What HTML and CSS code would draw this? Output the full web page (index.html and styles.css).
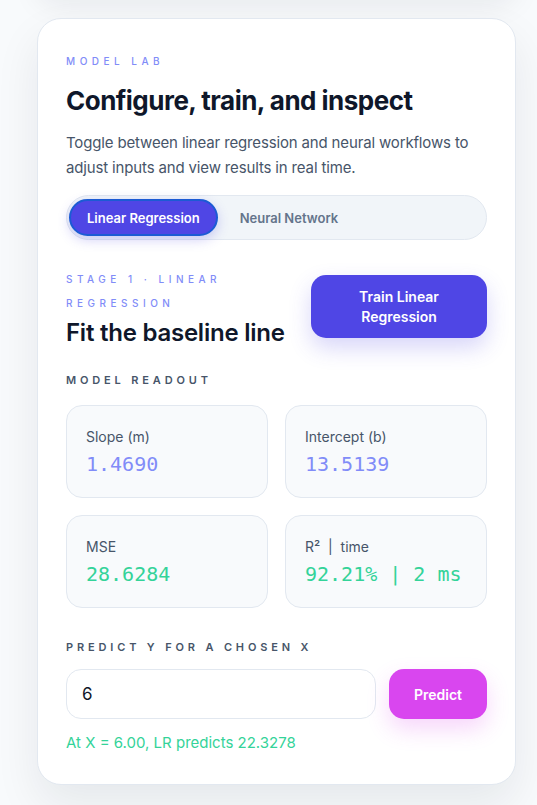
FILE: index.html
```html
<!DOCTYPE html>
<html lang="en">
<head>
<meta charset="utf-8">
<title>Model Lab</title>
<link rel="stylesheet" href="styles.css">
</head>
<body>
<div class="page">
  <div class="prev-card"></div>
  <section class="card">
    <p class="eyebrow">Model Lab</p>
    <h1 class="title">Configure, train, and inspect</h1>
    <p class="lead">Toggle between linear regression and neural workflows to adjust inputs and view results in real time.</p>

    <div class="toggle">
      <button class="toggle-btn active">Linear Regression</button>
      <button class="toggle-btn">Neural Network</button>
    </div>

    <div class="stage">
      <div class="stage-text">
        <p class="eyebrow stage-eyebrow">Stage 1 · Linear Regression</p>
        <h2 class="stage-title">Fit the baseline line</h2>
      </div>
      <button class="train-btn">Train Linear Regression</button>
    </div>

    <p class="section-label">Model Readout</p>
    <div class="stats">
      <div class="stat">
        <span class="stat-label">Slope (m)</span>
        <span class="stat-value indigo">1.4690</span>
      </div>
      <div class="stat">
        <span class="stat-label">Intercept (b)</span>
        <span class="stat-value indigo">13.5139</span>
      </div>
      <div class="stat">
        <span class="stat-label">MSE</span>
        <span class="stat-value green">28.6284</span>
      </div>
      <div class="stat">
        <span class="stat-label">R² &nbsp;|&nbsp; time</span>
        <span class="stat-value green">92.21% | 2 ms</span>
      </div>
    </div>

    <p class="section-label predict-label">Predict y for a chosen x</p>
    <div class="predict-row">
      <input class="predict-input" type="text" value="6">
      <button class="predict-btn">Predict</button>
    </div>
    <p class="result">At X = 6.00, LR predicts 22.3278</p>
  </section>
</div>
</body>
</html>
```

FILE: styles.css
```css
* { box-sizing: border-box; }

html, body {
  margin: 0;
  padding: 0;
  background: #f8fafc;
  font-family: Inter, "Noto Sans", sans-serif;
  color: #0f172a;
  overflow: hidden;
}

.page {
  padding: 0 21px 40px 37px;
  display: flex;
  flex-direction: column;
}

.prev-card {
  height: 40px;
  margin-top: -46px;
  margin-bottom: 24px;
  border-radius: 24px;
  background: #ffffff;
  box-shadow: 0 10px 30px rgba(15, 23, 42, 0.08);
}

.card {
  background: #ffffff;
  border: 1px solid #e2e8f0;
  border-radius: 24px;
  padding: 35px 28px 29px;
  box-shadow: 0 20px 45px rgba(15, 23, 42, 0.08);
  display: flex;
  flex-direction: column;
}

.eyebrow {
  margin: 0;
  font-size: 10px;
  line-height: 14px;
  font-weight: 500;
  text-transform: uppercase;
  letter-spacing: 0.45em;
  color: #818cf8;
}

.title {
  margin: 16px 0 0;
  font-size: 26px;
  line-height: 34px;
  font-weight: 700;
  letter-spacing: -0.02em;
  color: #0f172a;
}

.lead {
  margin: 12px 0 0;
  font-size: 15px;
  line-height: 25px;
  letter-spacing: -0.15px;
  color: #475569;
}

.toggle {
  margin-top: 15px;
  display: flex;
  align-items: center;
  gap: 4px;
  padding: 0 2px;
  height: 45px;
  border-radius: 999px;
  background: #f1f5f9;
  border: 1px solid #e2e8f0;
}

.toggle-btn {
  font-family: inherit;
  font-size: 13px;
  font-weight: 600;
  border: 2px solid transparent;
  background: transparent;
  color: #64748b;
  height: 37px;
  padding: 0 16px;
  border-radius: 999px;
}

.toggle-btn.active {
  background: #4f46e5;
  color: #ffffff;
  border-color: #1c5bd4;
  box-shadow: 0 4px 12px rgba(79, 70, 229, 0.25);
}

.stage {
  margin-top: 34px;
  display: flex;
  justify-content: space-between;
  align-items: flex-start;
}

.stage-eyebrow {
  line-height: 24px;
  margin-top: -7px;
}

.stage-title {
  margin: 3px 0 0;
  font-size: 24px;
  line-height: 30px;
  font-weight: 600;
  letter-spacing: -0.01em;
  color: #0f172a;
}

.train-btn {
  width: 176px;
  height: 63px;
  flex: none;
  margin-top: 1px;
  border: none;
  border-radius: 15px;
  background: #4f46e5;
  color: #ffffff;
  font-family: inherit;
  font-size: 14px;
  font-weight: 600;
  line-height: 20px;
  padding: 0 36px;
  box-shadow: 0 10px 22px rgba(79, 70, 229, 0.22);
}

.section-label {
  margin: 24px 0 0;
  font-size: 11px;
  line-height: 16px;
  font-weight: 600;
  letter-spacing: 0.35em;
  text-transform: uppercase;
  color: #475569;
}

.stats {
  margin-top: 17px;
  display: grid;
  grid-template-columns: 1fr 1fr;
  gap: 17px;
}

.stat {
  height: 93px;
  background: #f8fafc;
  border: 1px solid #e2e8f0;
  border-radius: 16px;
  padding: 20px 19px;
  display: flex;
  flex-direction: column;
  gap: 3px;
}

.stat-label {
  font-size: 14px;
  line-height: 22px;
  color: #475569;
}

.stat-value {
  font-family: "DejaVu Sans Mono", "Liberation Mono", monospace;
  font-size: 20px;
  line-height: 26px;
}

.indigo { color: #818cf8; }
.green { color: #34d399; }

.predict-label {
  margin-top: 31px;
}

.predict-row {
  margin-top: 14px;
  display: flex;
  gap: 13px;
}

.predict-input {
  flex: 1;
  min-width: 0;
  height: 50px;
  border: 1px solid #e2e8f0;
  border-radius: 15px;
  background: #ffffff;
  padding: 0 15px;
  font-family: inherit;
  font-size: 17px;
  color: #0f172a;
  outline: none;
}

.predict-btn {
  width: 98px;
  height: 50px;
  flex: none;
  border: none;
  border-radius: 15px;
  background: #d946ef;
  color: #ffffff;
  font-family: inherit;
  font-size: 14px;
  font-weight: 600;
  box-shadow: 0 10px 22px rgba(217, 70, 239, 0.22);
}

.result {
  margin: 12px 0 0;
  font-size: 15px;
  line-height: 24px;
  color: #34d399;
}
```
